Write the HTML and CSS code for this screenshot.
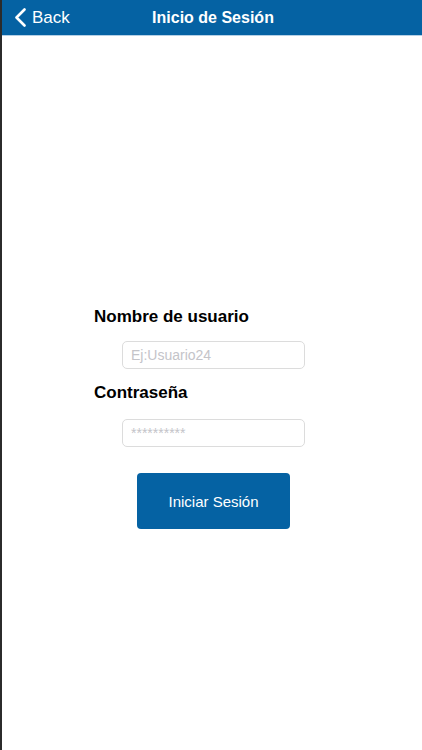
FILE: index.html
```html
<!DOCTYPE html>
<html>
<head>
    <link rel="stylesheet" href="styles.css">
</head>

<body>
    <div class="navbar">
        <a class="back" href="#">
            <svg width="13" height="19" viewBox="0 0 13 19">
                <path d="M10.5 1.5 L2.5 9.5 L10.5 17.5" fill="none" stroke="#ffffff" stroke-width="2.6" stroke-linecap="round" stroke-linejoin="round"/>
            </svg>
            <span>Back</span>
        </a>
        <div class="title">Inicio de Sesión</div>
        <div></div>
    </div>

    <div class="content">
        <div class="form">
            <label class="label" for="user">Nombre de usuario</label>
            <input type="text" id="user" class="field first" placeholder="Ej:Usuario24">

            <label class="label second" for="pass">Contraseña</label>
            <input type="text" id="pass" class="field" placeholder="**********">

            <button class="login">Iniciar Sesión</button>
        </div>
    </div>
</body>

</html>
```

FILE: styles.css
```css
html, body{
    margin: 0;
    height: 100%;
}
body{
    font-family: "Liberation Sans", Arial, sans-serif;
    background-color: #ffffff;
    border-left: 2px solid #2b2b2b;
    box-sizing: border-box;
}
.navbar{
    height: 36px;
    box-sizing: border-box;
    margin-left: -2px;
    border-left: 2px solid #0b3355;
    border-bottom: 1px solid #b5d0e6;
    background-color: #0562a3;
    display: grid;
    grid-template-columns: 1fr auto 1fr;
    align-items: center;
    color: #ffffff;
}
.back{
    display: flex;
    align-items: center;
    gap: 5px;
    padding-left: 12px;
    color: #ffffff;
    text-decoration: none;
    font-size: 17px;
}
.title{
    font-size: 16px;
    font-weight: bold;
    padding-left: 2px;
}
.content{
    padding-top: 271px;
}
.form{
    display: flex;
    flex-direction: column;
    align-items: flex-start;
    padding-left: 92px;
}
.label{
    font-size: 17px;
    line-height: 20px;
    font-weight: bold;
    color: #000000;
}
.second{
    margin-top: 14px;
}
.field{
    margin-top: 16px;
    margin-left: 28px;
    width: 183px;
    height: 28px;
    box-sizing: border-box;
    border: 1px solid #dcdcdc;
    border-radius: 5px;
    padding: 0 8px;
    font-family: "Liberation Sans", Arial, sans-serif;
    font-size: 14px;
    outline: none;
}
.first{
    margin-top: 14px;
}
.field::placeholder{
    color: #c4c4c9;
}
.login{
    margin-top: 26px;
    margin-left: 43px;
    width: 153px;
    height: 56px;
    border: none;
    border-radius: 4px;
    background-color: #0562a3;
    color: #ffffff;
    font-family: "Liberation Sans", Arial, sans-serif;
    font-size: 15px;
}
```
